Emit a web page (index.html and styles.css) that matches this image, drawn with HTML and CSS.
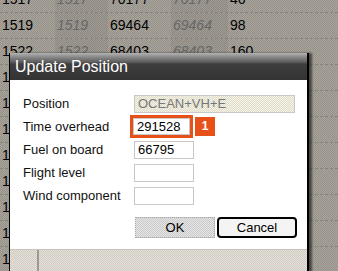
FILE: index.html
```html
<!DOCTYPE html>
<html lang="en">
<head>
  <meta charset="UTF-8">
  <title>Update Position</title>
  <link rel="stylesheet" href="styles.css">
</head>
<body>
  <div class="grid">
    <div class="row"><span>1517</span><span class="alt">1517</span><span>70177</span><span class="alt">70177</span><span>46</span></div>
    <div class="row"><span>1519</span><span class="alt">1519</span><span>69464</span><span class="alt">69464</span><span>98</span></div>
    <div class="row"><span>1522</span><span class="alt">1522</span><span>68403</span><span class="alt">68403</span><span>160</span></div>
    <div class="row"><span>1525</span><span class="alt">1525</span><span>67712</span><span class="alt">67712</span><span>210</span></div>
    <div class="row"><span>1528</span><span class="alt">1528</span><span>66795</span><span class="alt">66795</span><span>240</span></div>
    <div class="row"><span>1531</span><span class="alt">1531</span><span>65980</span><span class="alt">65980</span><span>280</span></div>
    <div class="row"><span>1534</span><span class="alt">1534</span><span>65102</span><span class="alt">65102</span><span>310</span></div>
    <div class="row"><span>1537</span><span class="alt">1537</span><span>64288</span><span class="alt">64288</span><span>340</span></div>
    <div class="row"><span>1540</span><span class="alt">1540</span><span>63401</span><span class="alt">63401</span><span>350</span></div>
    <div class="row"><span>1543</span><span class="alt">1543</span><span>62560</span><span class="alt">62560</span><span>350</span></div>
    <div class="row"><span>1546</span><span class="alt">1546</span><span>61733</span><span class="alt">61733</span><span>350</span></div>
  </div>

  <div class="dialog">
    <div class="dialog-title">Update Position</div>
    <form class="dialog-body">
      <div class="fields">
        <label for="pos">Position</label>
        <input id="pos" class="field wide" type="text" value="OCEAN+VH+E" readonly>

        <label for="tov">Time overhead</label>
        <div class="with-badge">
          <input id="tov" class="field active" type="text" value="291528">
          <span class="badge">1</span>
        </div>

        <label for="fob">Fuel on board</label>
        <input id="fob" class="field" type="text" value="66795">

        <label for="fl">Flight level</label>
        <input id="fl" class="field" type="text">

        <label for="wind">Wind component</label>
        <input id="wind" class="field" type="text">
      </div>
      <div class="buttons">
        <button type="button" class="btn ok">OK</button>
        <button type="button" class="btn cancel">Cancel</button>
      </div>
    </form>
    <div class="dialog-foot"><div class="foot-cell"></div></div>
  </div>
</body>
</html>
```

FILE: styles.css
```css
html, body {
  margin: 0;
  padding: 0;
  height: 271px;
  overflow: hidden;
}
body {
  font-family: "Liberation Sans", Arial, sans-serif;
  background: repeating-conic-gradient(#aaa69d 0 25%, #948f87 0 50%) 0 0 / 2px 2px;
  position: relative;
}
.grid {
  margin-top: -13px;
}
.row {
  display: grid;
  grid-template-columns: 55px 53px 63px 57px 1fr;
  height: 25px;
  border-bottom: 1px dashed #85827b;
  align-items: center;
  font-size: 14px;
  color: #000;
}
.row span {
  padding-left: 2px;
  height: 100%;
  line-height: 25px;
}
.row .alt {
  font-style: italic;
  color: #666;
  background: rgba(0, 0, 0, 0.05);
}
.dialog {
  position: absolute;
  left: 9px;
  top: 53px;
  width: 297px;
  height: 230px;
  background: #fff;
  border-left: 1px solid #000;
  border-right: 2px solid #000;
  box-shadow: 3px 0 2px rgba(0, 0, 0, 0.55);
}
.dialog-title {
  height: 27px;
  line-height: 28px;
  padding-left: 5px;
  color: #fff;
  font-size: 16px;
  background: linear-gradient(#b2b2b2 0, #808080 5px, #5e5e5e 9px, #3e3e3e 11px, #333 27px);
}
.dialog-body {
  padding: 12px 10px 0 13px;
  font-size: 13px;
}
.fields {
  display: grid;
  grid-template-columns: 111px 1fr;
  grid-auto-rows: 23px;
  align-items: center;
}
.fields label {
  color: #111;
}
.field {
  box-sizing: border-box;
  width: 60px;
  height: 18px;
  margin: 0;
  padding: 0 3px;
  border: 1px solid #c8c8c8;
  font: 13px "Liberation Sans", Arial, sans-serif;
  color: #000;
  background: #fff;
}
.field.wide {
  width: 161px;
  color: #777;
  background: repeating-conic-gradient(#f6f4e8 0 25%, #dedbc8 0 50%) 0 0 / 2px 2px;
}
.with-badge {
  display: flex;
  align-items: center;
  gap: 5px;
}
.field.active {
  width: 57px;
  height: 17px;
  margin-left: -1px;
  outline: 3px solid #e8501a;
  outline-offset: 0;
}
.badge {
  width: 20px;
  height: 19px;
  line-height: 19px;
  text-align: center;
  background: #e8501a;
  color: #fff;
  font-weight: bold;
  font-size: 12px;
}
.buttons {
  display: flex;
  justify-content: flex-end;
  gap: 2px;
  margin-top: 10px;
}
.btn {
  box-sizing: border-box;
  width: 80px;
  height: 21px;
  padding: 0;
  font: 13px "Liberation Sans", Arial, sans-serif;
  color: #000;
}
.ok {
  border: 1px dotted #aaa;
  background: repeating-conic-gradient(#e6e6e6 0 25%, #c9c9c9 0 50%) 0 0 / 2px 2px;
}
.cancel {
  border: 2px solid #000;
  border-radius: 4px;
  background: #f4f4f4;
}
.dialog-foot {
  margin-top: 11px;
  height: 40px;
  border-top: 1px solid #c9c5bd;
  background: repeating-conic-gradient(#e6e2da 0 25%, #cfcac2 0 50%) 0 0 / 2px 2px;
}
.foot-cell {
  width: 27px;
  height: 100%;
  border-right: 2px solid #9d9a94;
}
```
